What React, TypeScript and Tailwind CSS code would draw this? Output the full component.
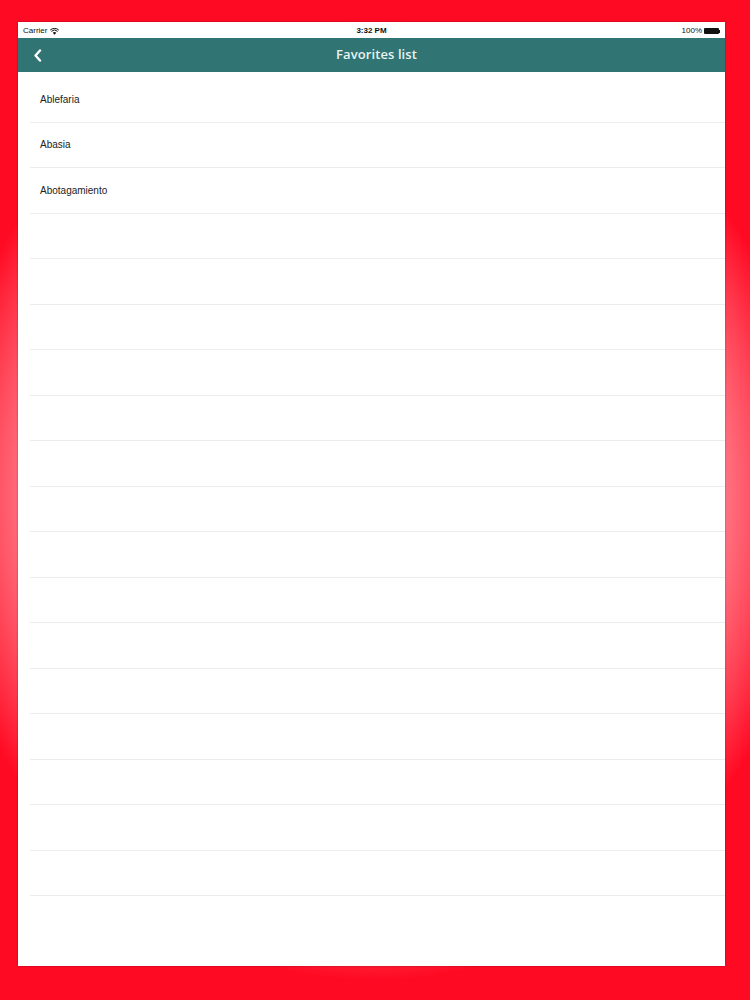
import React from "react";

const items = ["Ablefaria", "Abasia", "Abotagamiento"];

export default function App() {
  const rows = Array.from({ length: 18 }, (_, i) => items[i] ?? "");
  return (
    <div className="w-[750px] h-[1000px] overflow-hidden bg-[#ff0a23] bg-[radial-gradient(440px_480px_at_50%_50%,#ffffff_0%,#ffffff_52%,#ff0a23_100%)] pt-[22px] pl-[18px]">
      <div className="w-[707px] h-[944px] bg-white flex flex-col shadow-[0_0_2px_rgba(0,0,0,0.35)] [font-family:'Liberation_Sans',Arial,sans-serif]">
        {/* status bar */}
        <div className="h-[16px] pt-[2px] flex items-center justify-between px-[5px] text-[8px] text-[#111] relative">
          <div className="flex items-center gap-[3px]">
            <span>Carrier</span>
            <svg width="9" height="7" viewBox="0 0 18 13">
              <path d="M9 13 L5.5 9 A5 5 0 0 1 12.5 9 Z" fill="#111" />
              <path d="M2.8 6.2 A9 9 0 0 1 15.2 6.2" stroke="#111" strokeWidth="2" fill="none" />
              <path d="M0.5 3.6 A12.5 12.5 0 0 1 17.5 3.6" stroke="#111" strokeWidth="2" fill="none" />
            </svg>
          </div>
          <span className="absolute left-1/2 -translate-x-1/2 font-bold">3:32 PM</span>
          <div className="flex items-center gap-[2px]">
            <span>100%</span>
            <div className="flex items-center">
              <div className="w-[15px] h-[6px] bg-[#111] rounded-[1px]" />
              <div className="w-[1px] h-[3px] bg-[#111]" />
            </div>
          </div>
        </div>
        {/* nav bar */}
        <div className="h-[34px] bg-[#307473] flex items-center relative">
          <svg className="absolute left-[15px]" width="9" height="13" viewBox="0 0 9 13">
            <path d="M7 1.5 L2.5 6.5 L7 11.5" stroke="#ffffff" strokeWidth="2.4" fill="none" strokeLinecap="round" strokeLinejoin="round" />
          </svg>
          <span className="mx-auto translate-x-[5px] text-[13px] font-semibold text-[#e8f3f2] [font-family:'Open_Sans',Lato,sans-serif] tracking-[0.1px]">
            Favorites list
          </span>
        </div>
        {/* list */}
        <div className="pt-[5px] pl-[12px]">
          {rows.map((t, i) => (
            <div key={i} className="h-[45.5px] border-b border-[#ececec] flex items-center pl-[10px] text-[10px] text-[#222]">
              {t}
            </div>
          ))}
        </div>
      </div>
    </div>
  );
}
